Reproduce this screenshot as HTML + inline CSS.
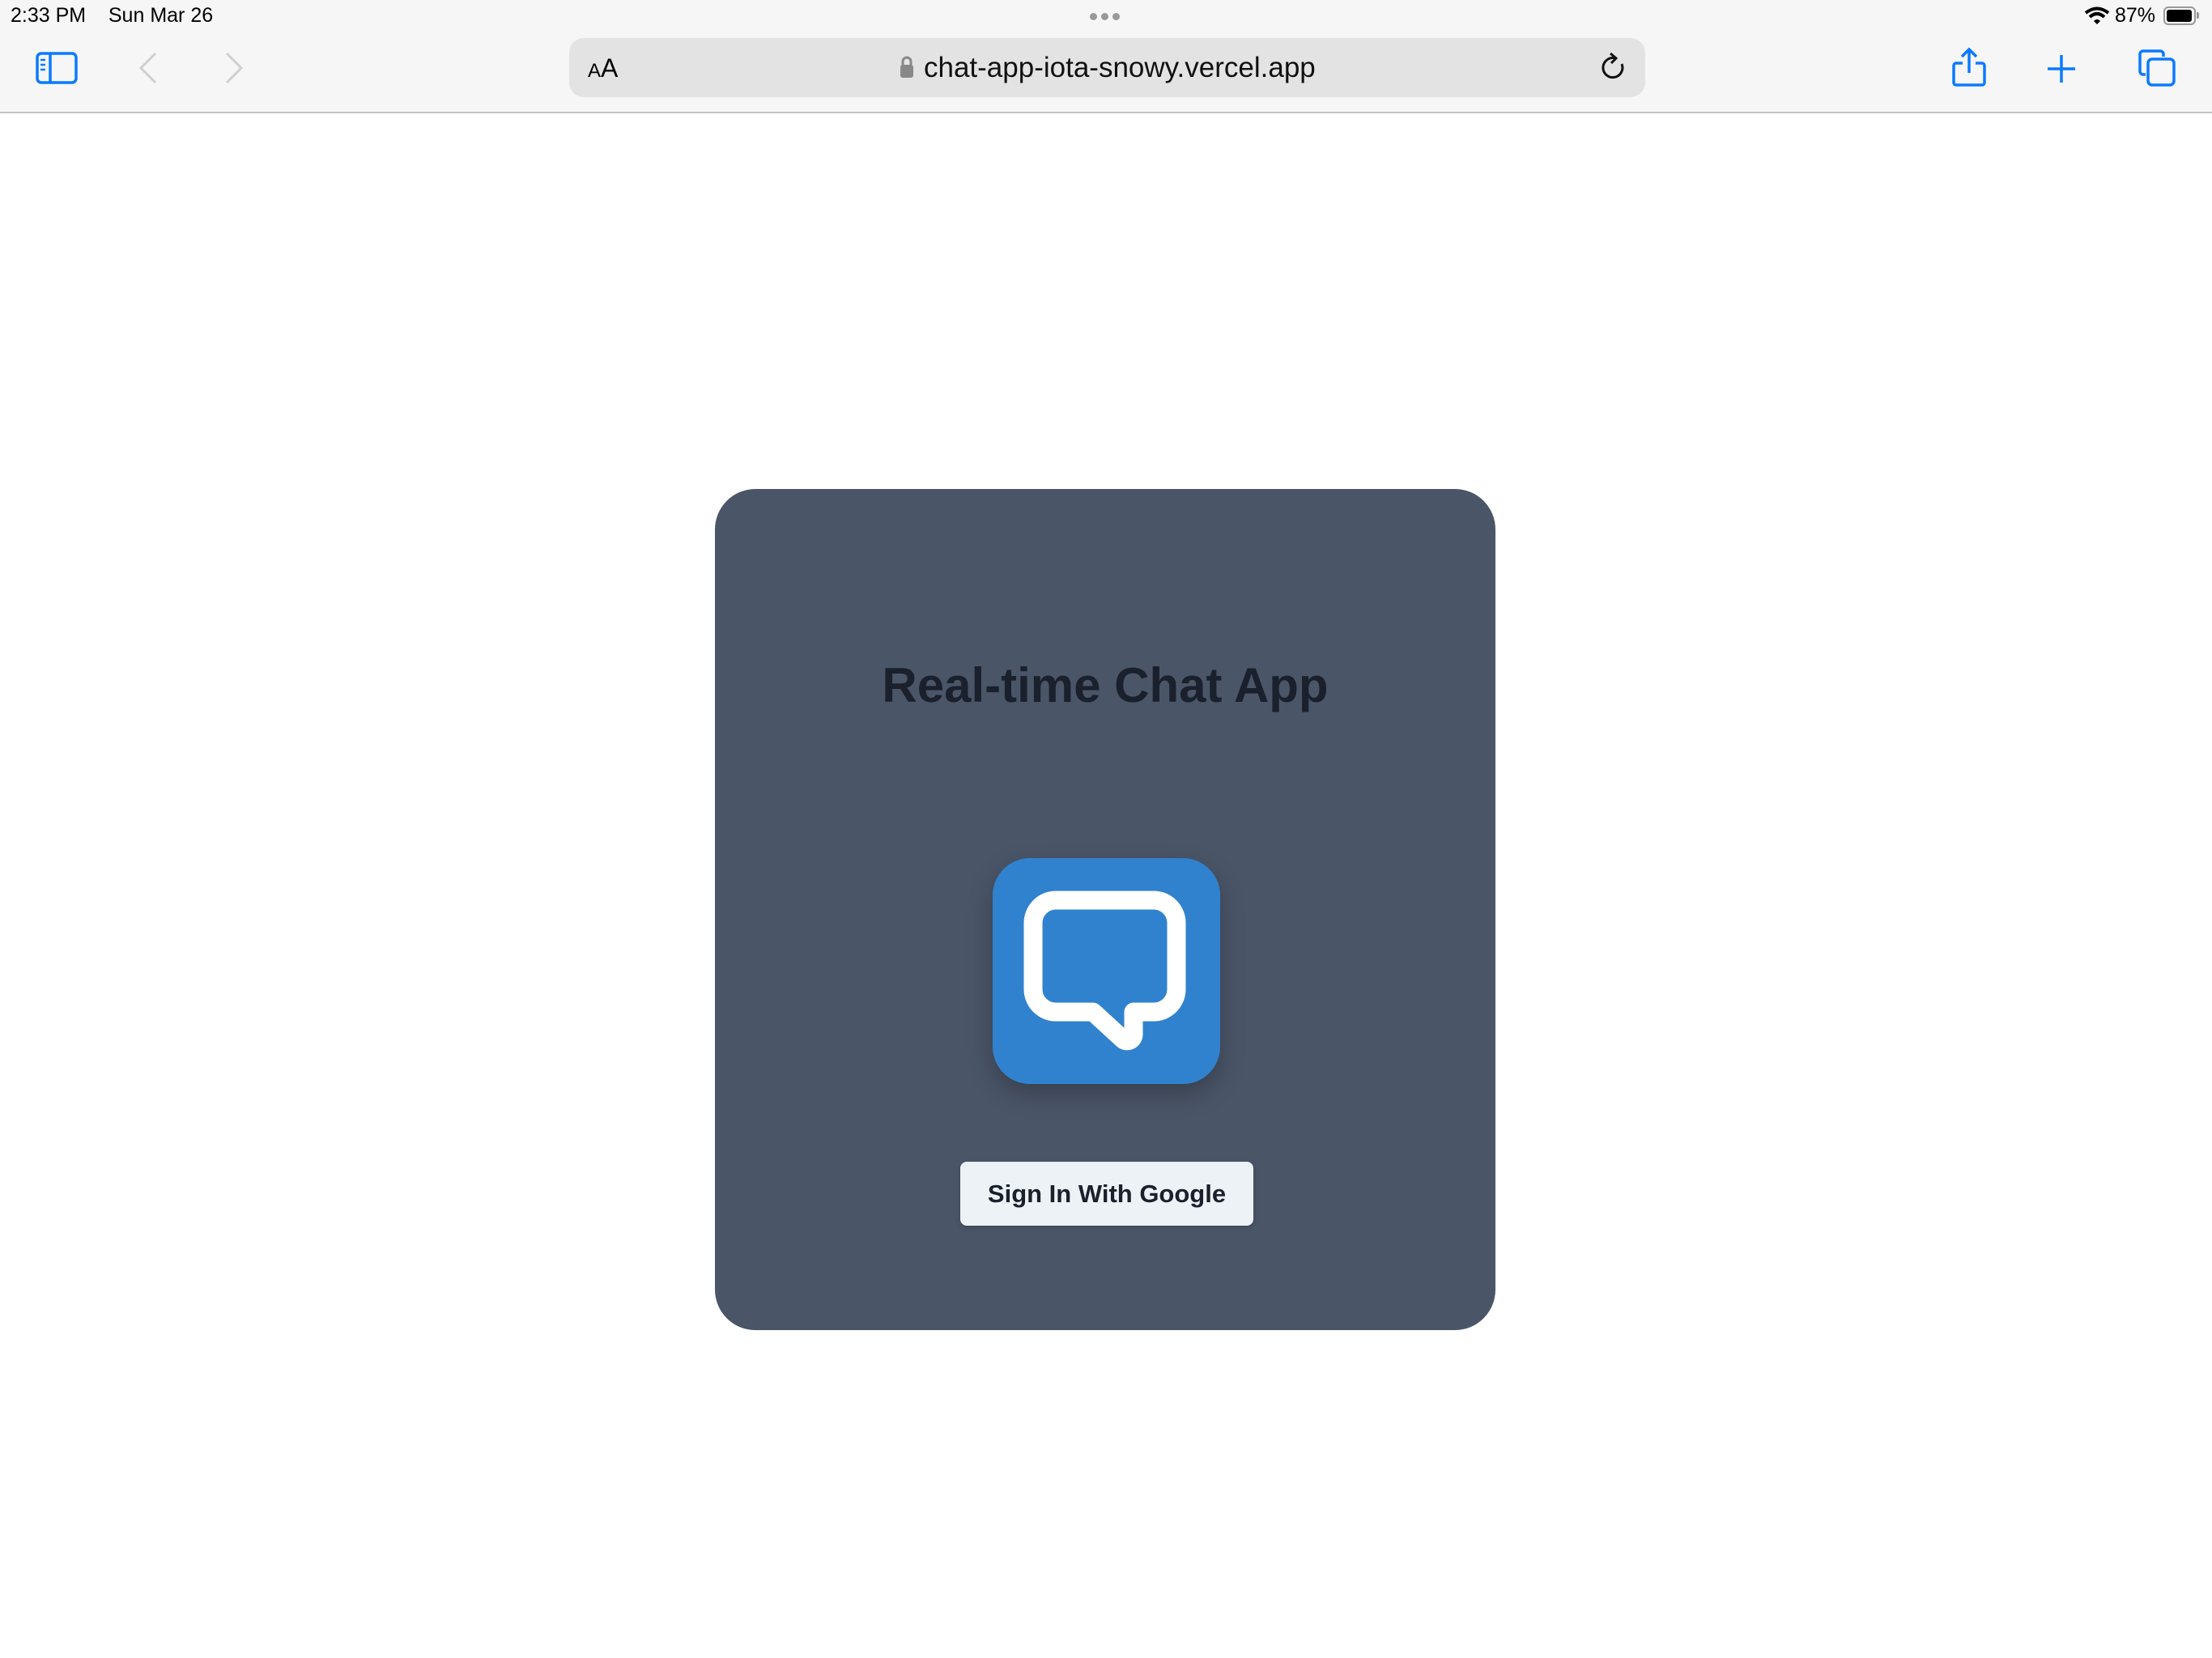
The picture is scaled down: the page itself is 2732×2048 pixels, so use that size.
<!DOCTYPE html>
<html><head><meta charset="utf-8"><style>
*{margin:0;padding:0;box-sizing:border-box}
body{width:2732px;height:2048px;background:#fff;position:relative;overflow:hidden;font-family:"Liberation Sans",sans-serif}
.top{position:absolute;left:0;top:0;width:2732px;height:140px;background:#f6f6f6;border-bottom:2px solid #c4c4c4}
.st{position:absolute;top:5px;font-size:25px;color:#000}
.url{position:absolute;left:703px;top:47px;width:1329px;height:73px;background:#e3e3e3;border-radius:18px}
.card{position:absolute;left:883px;top:604px;width:964px;height:1039px;background:#4a5568;border-radius:50px}
h1{position:absolute;left:0;width:964px;top:208px;text-align:center;font-size:60px;font-weight:bold;color:#1a202c}
.icon{position:absolute;left:343px;top:456px;width:281px;height:279px;background:#3182ce;border-radius:46px;box-shadow:0 12px 30px rgba(0,0,0,.25)}
.btn{position:absolute;left:303px;top:831px;width:362px;height:79px;background:#edf2f7;border-radius:8px;text-align:center;line-height:79px;font-size:31px;font-weight:bold;color:#1a202c;box-shadow:0 2px 6px rgba(0,0,0,.2)}
</style></head><body>
<div class="top">
<div class="st" style="left:13px">2:33 PM&nbsp;&nbsp;&nbsp;&nbsp;Sun Mar 26</div>
<div style="position:absolute;left:1346px;top:16px;width:40px;height:10px">
<span style="position:absolute;left:0;width:9px;height:9px;border-radius:50%;background:#999"></span>
<span style="position:absolute;left:14px;width:9px;height:9px;border-radius:50%;background:#999"></span>
<span style="position:absolute;left:28px;width:9px;height:9px;border-radius:50%;background:#999"></span></div>
<svg style="position:absolute;left:2574px;top:8px" width="32" height="22" viewBox="0 0 32 22"><path d="M2 8 Q16 -3 30 8" stroke="#000" stroke-width="4" fill="none"/><path d="M7 13 Q16 5 25 13" stroke="#000" stroke-width="4" fill="none"/><path d="M12 18 L16 22 L20 18 Q16 14 12 18Z" fill="#000"/></svg>
<div class="st" style="left:2612px">87%</div>
<div style="position:absolute;left:2672px;top:8px;width:40px;height:23px;border:2px solid #999;border-radius:6px;padding:2px"><div style="width:31px;height:15px;background:#000;border-radius:3px"></div></div>
<div style="position:absolute;left:2713px;top:15px;width:3px;height:8px;background:#999;border-radius:0 2px 2px 0"></div>
<svg style="position:absolute;left:44px;top:64px" width="52" height="40" viewBox="0 0 52 40"><rect x="2" y="2" width="48" height="36" rx="5" fill="none" stroke="#0a7aff" stroke-width="3.5"/><line x1="18" y1="2" x2="18" y2="38" stroke="#0a7aff" stroke-width="3.5"/><line x1="6" y1="10" x2="12" y2="10" stroke="#0a7aff" stroke-width="2.5"/><line x1="6" y1="16" x2="12" y2="16" stroke="#0a7aff" stroke-width="2.5"/><line x1="6" y1="22" x2="12" y2="22" stroke="#0a7aff" stroke-width="2.5"/></svg>
<svg style="position:absolute;left:170px;top:64px" width="26" height="40"><path d="M22 2 L4 20 L22 38" stroke="#cfcfcf" stroke-width="3" fill="none"/></svg>
<svg style="position:absolute;left:276px;top:64px" width="26" height="40"><path d="M4 2 L22 20 L4 38" stroke="#cfcfcf" stroke-width="3" fill="none"/></svg>
<div class="url">
<div style="position:absolute;left:23px;top:19px;font-size:32px;color:#000"><span style="font-size:24px">A</span>A</div>
<svg style="position:absolute;left:407px;top:21px" width="20" height="30" viewBox="0 0 20 30"><path d="M5 13 V8 a5 5 0 0 1 10 0 V13" stroke="#888" stroke-width="3" fill="none"/><rect x="2" y="12" width="16" height="16" rx="3" fill="#888"/></svg>
<div style="position:absolute;left:438px;top:17px;font-size:35px;color:#111">chat-app-iota-snowy.vercel.app</div>
<svg style="position:absolute;left:1272px;top:18px" width="34" height="38" viewBox="0 0 34 38"><path d="M20 7 A12 12 0 1 0 28 14" stroke="#111" stroke-width="3" fill="none"/><path d="M14 1 L21 7 L15 13" stroke="#111" stroke-width="3" fill="none"/></svg>
</div>
<svg style="position:absolute;left:2410px;top:58px" width="44" height="50" viewBox="0 0 44 50"><path d="M14 20 H6 a3 3 0 0 0 -3 3 V44 a3 3 0 0 0 3 3 H38 a3 3 0 0 0 3 -3 V23 a3 3 0 0 0 -3 -3 H30" stroke="#0a7aff" stroke-width="3.5" fill="none"/><path d="M22 32 V3 M13 12 L22 3 L31 12" stroke="#0a7aff" stroke-width="3.5" fill="none"/></svg>
<svg style="position:absolute;left:2527px;top:66px" width="38" height="38"><path d="M19 2 V36 M2 19 H36" stroke="#0a7aff" stroke-width="3.5"/></svg>
<svg style="position:absolute;left:2640px;top:60px" width="48" height="48" viewBox="0 0 48 48"><path d="M10 32 H7 a4 4 0 0 1 -4 -4 V7 a4 4 0 0 1 4 -4 H28 a4 4 0 0 1 4 4 V10" stroke="#0a7aff" stroke-width="3.5" fill="none"/><rect x="13" y="13" width="32" height="32" rx="5" stroke="#0a7aff" stroke-width="3.5" fill="none"/></svg>
</div>
<div class="card">
<h1>Real-time Chat App</h1>
<div class="icon">
<svg width="281" height="279" viewBox="0 0 281 279"><path d="M78 52 H199 a28 28 0 0 1 28 28 V162 a28 28 0 0 1 -28 28 H174 V218 a8 8 0 0 1 -14 5 L124 190 H78 a28 28 0 0 1 -28 -28 V80 a28 28 0 0 1 28 -28Z" fill="none" stroke="#fff" stroke-width="23" stroke-linejoin="round"/></svg>
</div>
<div class="btn">Sign In With Google</div>
</div>
</body></html>
